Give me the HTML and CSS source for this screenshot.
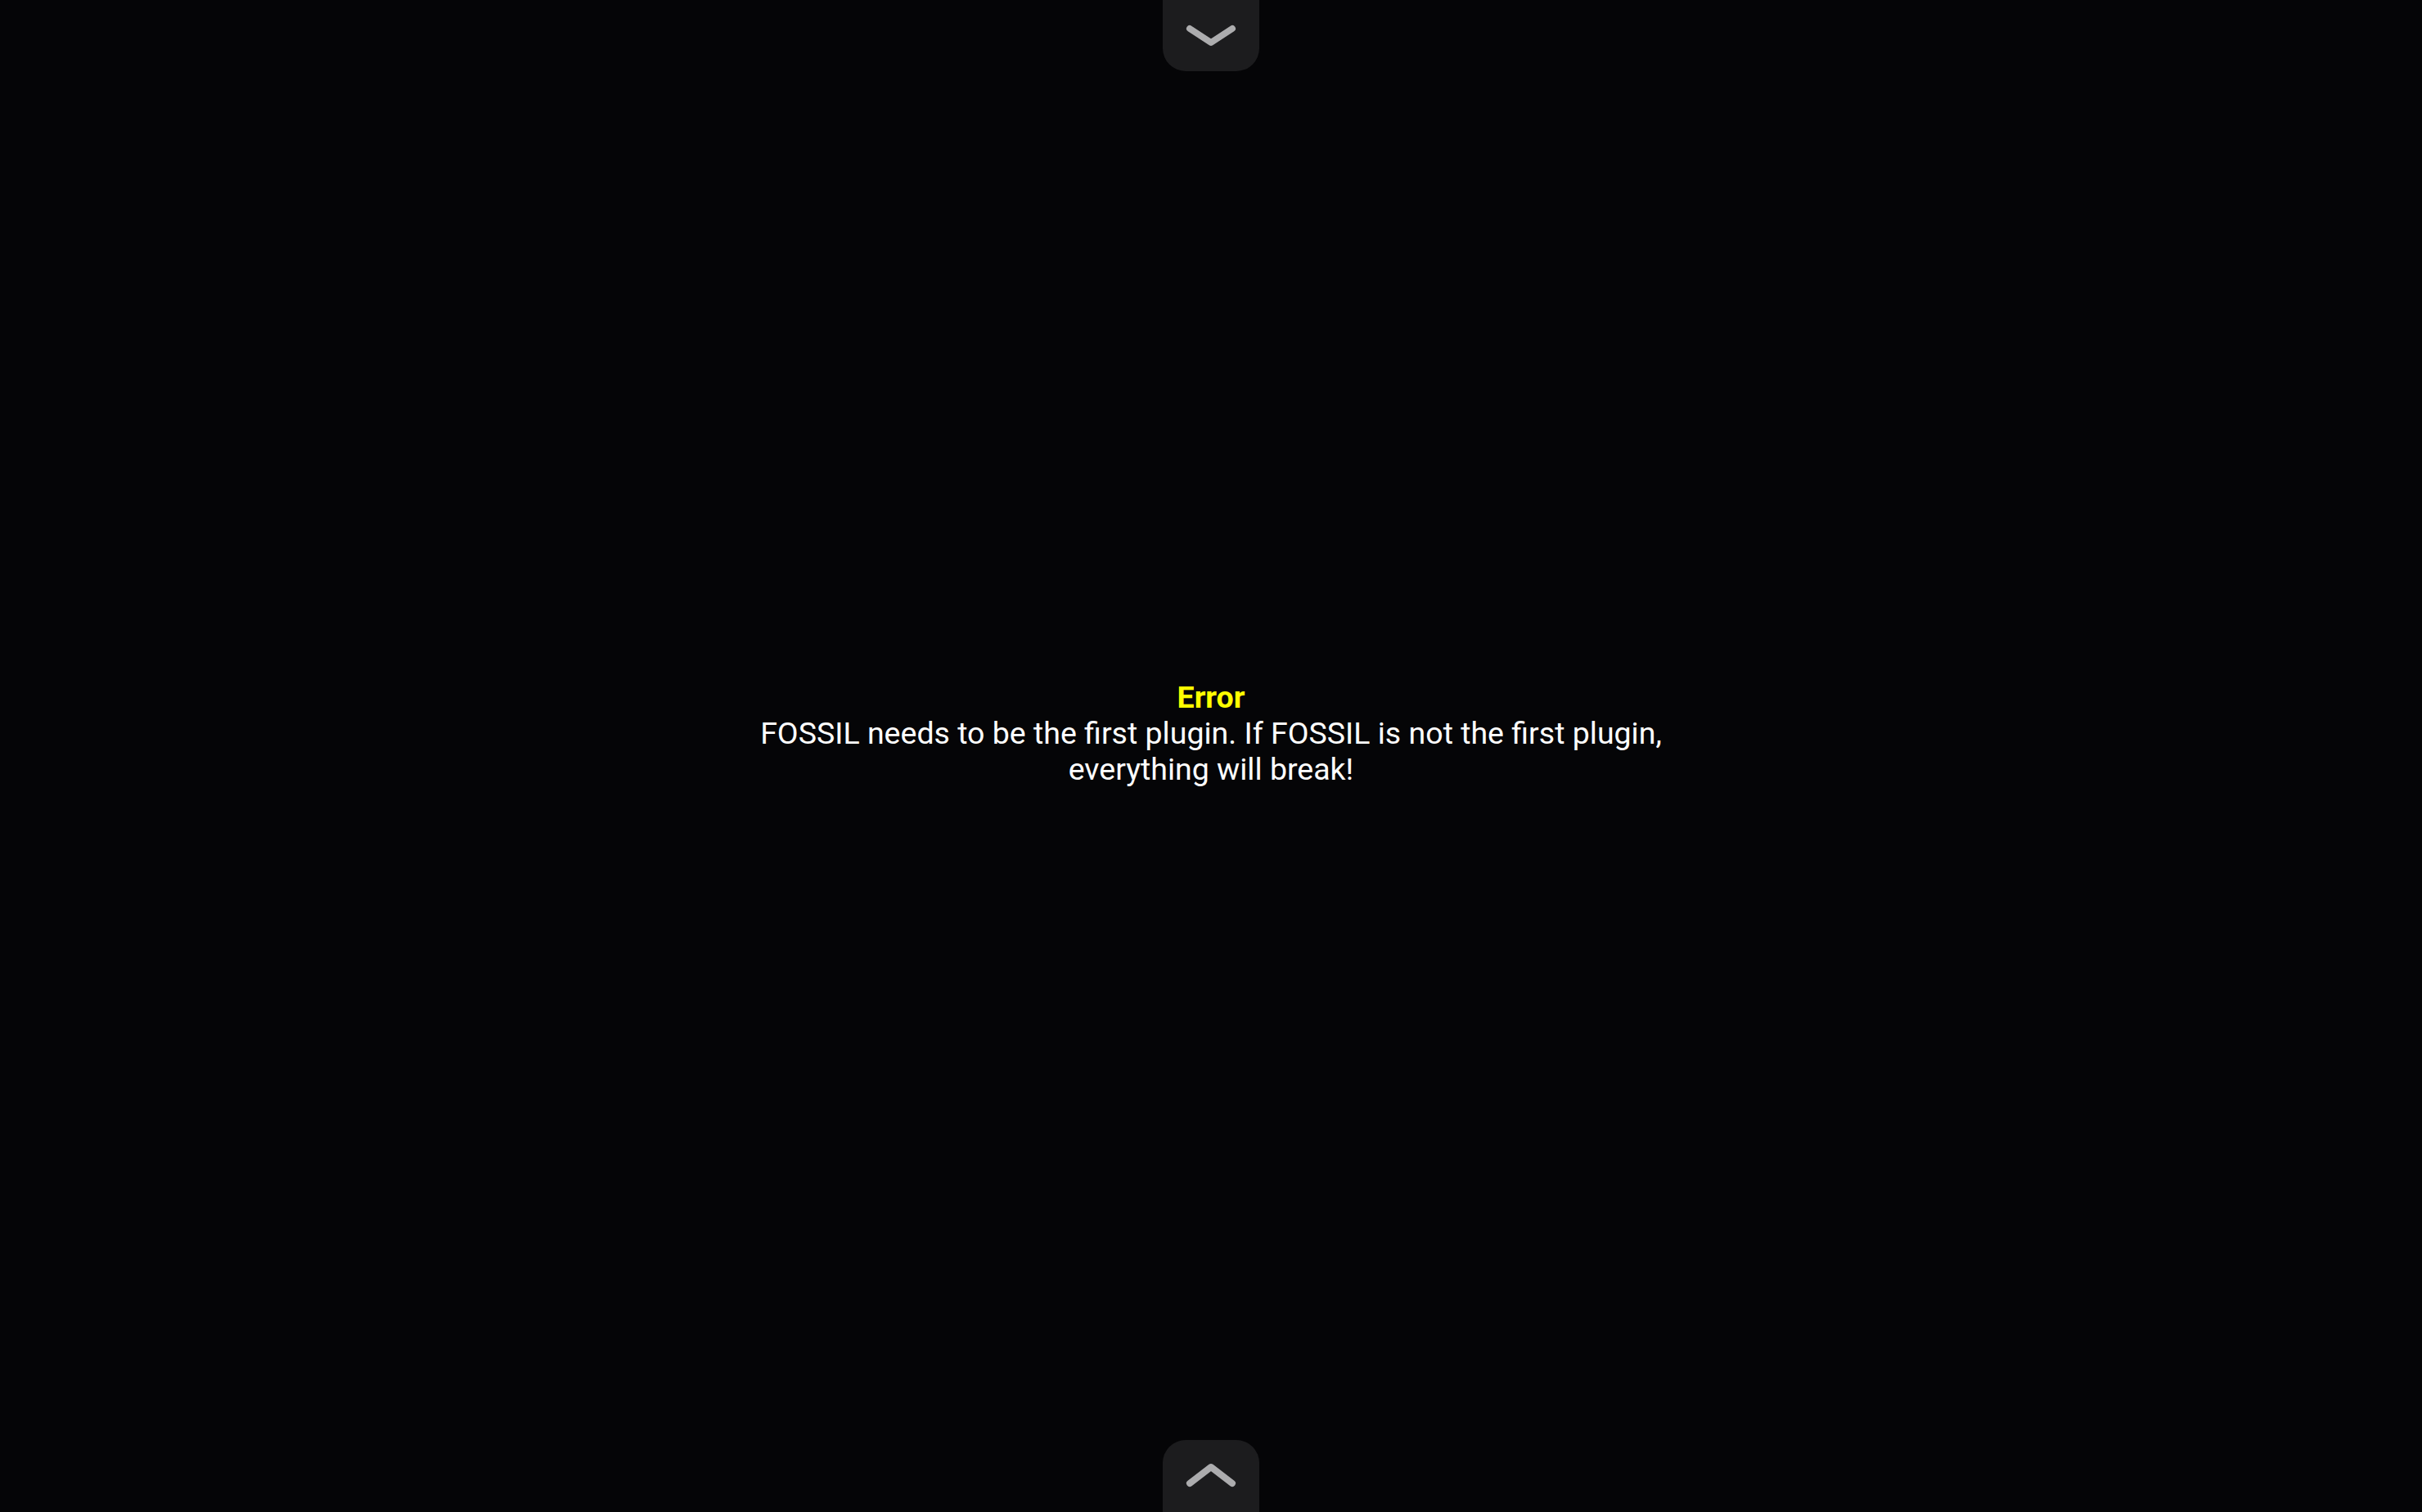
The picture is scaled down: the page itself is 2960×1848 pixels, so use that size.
FILE: index.html
```html
<!DOCTYPE html>
<html lang="en">
<head>
<meta charset="utf-8">
<title>Error</title>
<link rel="stylesheet" href="styles.css">
</head>
<body>
<div class="screen">
  <div class="nav-btn nav-top">
    <svg class="chev" width="118" height="87" viewBox="0 0 118 87"><polyline points="33,35 59,52 85,35" fill="none" stroke="#acacae" stroke-width="8" stroke-linecap="round" stroke-linejoin="round"/></svg>
  </div>
  <main class="content">
    <div class="message">
      <div class="title">Error</div>
      <div class="body">FOSSIL needs to be the first plugin. If FOSSIL is not the first plugin, everything will break!</div>
    </div>
  </main>
  <div class="nav-btn nav-bottom">
    <svg class="chev" width="118" height="88" viewBox="0 0 118 88"><polyline points="33,53 59,33 85,53" fill="none" stroke="#acacae" stroke-width="8" stroke-linecap="round" stroke-linejoin="round"/></svg>
  </div>
</div>
</body>
</html>
```
FILE: styles.css
```css
html, body {
  margin: 0;
  padding: 0;
  height: 100%;
  background: #050507;
}
body {
  font-family: Roboto, "Liberation Sans", sans-serif;
}
.screen {
  height: 100vh;
  display: flex;
  flex-direction: column;
  align-items: center;
}
.nav-btn {
  width: 118px;
  background: #1c1c1e;
  flex: none;
}
.chev {
  display: block;
}
.nav-top {
  height: 87px;
  border-radius: 0 0 28px 28px;
}
.nav-bottom {
  height: 88px;
  border-radius: 28px 28px 0 0;
}
.content {
  flex: 1;
  width: 100%;
  display: flex;
  align-items: center;
  justify-content: center;
  padding-bottom: 56px;
  box-sizing: border-box;
}
.message {
  max-width: 1250px;
  text-align: center;
  font-size: 37.5px;
  line-height: 44px;
}
.title {
  color: #ffff00;
  font-weight: 700;
}
.body {
  color: #ffffff;
}
```
